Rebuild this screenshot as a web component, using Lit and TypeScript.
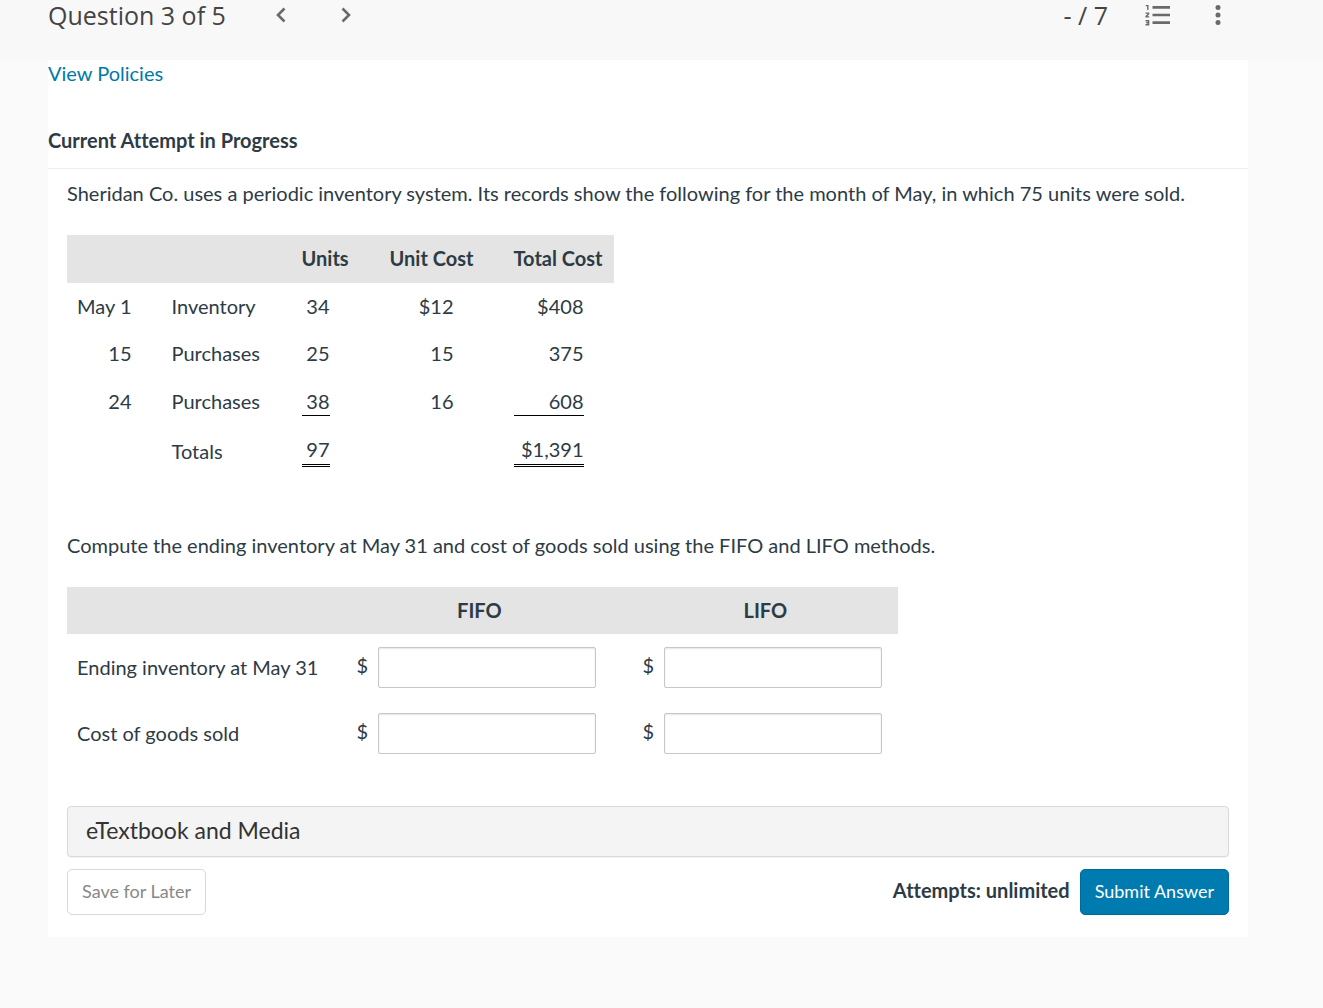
import { LitElement, html, css, svg } from "lit";
import { customElement } from "lit/decorators.js";

interface RecordRow {
  date: string;
  label: string;
  units: string;
  unitCost: string;
  total: string;
  rule: "" | "single" | "double";
}

const RECORDS: RecordRow[] = [
  { date: "May 1", label: "Inventory", units: "34", unitCost: "$12", total: "$408", rule: "" },
  { date: "15", label: "Purchases", units: "25", unitCost: "15", total: "375", rule: "" },
  { date: "24", label: "Purchases", units: "38", unitCost: "16", total: "608", rule: "single" },
  { date: "", label: "Totals", units: "97", unitCost: "", total: "$1,391", rule: "double" },
];

const ANSWERS = [
  { id: "ending", label: "Ending inventory at May 31" },
  { id: "cogs", label: "Cost of goods sold" },
];

const METHODS = ["FIFO", "LIFO"];

@customElement("question-header")
export class QuestionHeader extends LitElement {
  static styles = css`
    :host {
      display: block;
      background: #f8f8f8;
    }
    .bar {
      display: flex;
      align-items: center;
      justify-content: space-between;
      height: 30px;
      padding: 0 90px 30px 48px;
      font-family: "Open Sans", "Noto Sans", sans-serif;
      font-size: 25px;
      line-height: 30px;
      color: #444;
    }
    .side {
      display: flex;
      align-items: center;
    }
    .title {
      margin: 0;
      font-size: inherit;
      font-weight: 400;
    }
    .icon {
      display: flex;
      align-items: center;
      justify-content: center;
      width: 30px;
      height: 30px;
      padding: 0;
      border: 0;
      background: none;
      color: #6a6a6a;
      cursor: pointer;
    }
    .prev {
      margin-left: 40px;
    }
    .next {
      margin-left: 35px;
    }
    .list {
      margin-left: 35px;
    }
    .more {
      margin-left: 30px;
    }
    .icon svg {
      display: block;
    }
  `;

  private chevron(points: string) {
    return html`<svg width="12" height="16" viewBox="0 0 12 16" aria-hidden="true">
      ${svg`<polyline points=${points} fill="none" stroke="currentColor" stroke-width="2.6"/>`}
    </svg>`;
  }

  render() {
    return html`
      <header class="bar">
        <div class="side">
          <h1 class="title">Question 3 of 5</h1>
          <button class="icon prev" aria-label="Previous question">${this.chevron("9.5,1.5 3,8 9.5,14.5")}</button>
          <button class="icon next" aria-label="Next question">${this.chevron("2.5,1.5 9,8 2.5,14.5")}</button>
        </div>
        <div class="side">
          <span>- / 7</span>
          <button class="icon list" aria-label="Question list">
            <svg width="26" height="22" viewBox="0 0 26 22" aria-hidden="true">
              <path d="M7.5 3.4H25M7.5 11H25M7.5 18.6H25" stroke="currentColor" stroke-width="2.6" />
              <path
                d="M.8 1.6H2.8V6M.5 9.1H3.6V10L1.1 12.4V12.9H4.3M.5 16.7H3.6V20.8H.5M1.3 18.8H3.6"
                fill="none"
                stroke="currentColor"
                stroke-width="1.4"
              />
            </svg>
          </button>
          <button class="icon more" aria-label="More options">
            <svg width="6" height="20" viewBox="0 0 6 20" aria-hidden="true">
              <circle cx="3" cy="2.5" r="2.5" fill="currentColor" />
              <circle cx="3" cy="10" r="2.5" fill="currentColor" />
              <circle cx="3" cy="17.5" r="2.5" fill="currentColor" />
            </svg>
          </button>
        </div>
      </header>
    `;
  }
}

@customElement("app-root")
export class AppRoot extends LitElement {
  static styles = css`
    :host {
      display: block;
      min-height: 100vh;
      background: #fafafa;
      font-family: Lato, "Liberation Sans", sans-serif;
      font-size: 20px;
      font-variant-ligatures: none;
      line-height: 27px;
      color: #2d3b45;
    }
    .card {
      margin: 0 75px 0 48px;
      background: #fff;
    }
    .policies {
      display: inline-block;
      color: #0079a8;
      text-decoration: none;
    }
    .attempt {
      margin: 0;
      padding: 40px 0 14px;
      border-bottom: 1px solid #eee;
      font-size: 20px;
      font-weight: 700;
    }
    .body {
      padding: 11px 19px 22px;
    }
    .text {
      margin: 0;
    }
    table {
      border-collapse: collapse;
    }
    .records {
      margin: 28px 0 55px;
    }
    .answers {
      margin: 28px 0 40px;
    }
    th,
    td {
      padding: 10px 30px 10px 10px;
      white-space: nowrap;
      text-align: left;
    }
    thead tr {
      background: #e4e4e4;
    }
    .records thead th {
      padding-bottom: 11px;
    }
    .item {
      min-width: 90px;
    }
    .units {
      min-width: 48px;
    }
    .cost {
      min-width: 84px;
    }
    .total {
      min-width: 90px;
    }
    th:last-child {
      padding-right: 10px;
    }
    .num {
      text-align: right;
    }
    .wide {
      padding-right: 50px;
    }
    .single {
      border-bottom: 1px solid #000;
      line-height: 28px;
    }
    .double {
      padding-bottom: 1px;
      border-bottom: 3px double #000;
    }
    .answers th {
      text-align: center;
    }
    .answers .row {
      padding-right: 28px;
      text-align: left;
      font-weight: 400;
    }
    .answers tbody td:last-child {
      padding-right: 10px;
    }
    .answers tbody th,
    .answers tbody td {
      padding-top: 13px;
      padding-bottom: 12px;
    }
    .money {
      display: flex;
      align-items: center;
      gap: 10px;
      width: 246px;
    }
    .sign {
      width: 12px;
      padding-bottom: 4px;
    }
    .field {
      box-sizing: border-box;
      width: 218px;
      height: 41px;
      padding: 8px 12px;
      border: 1px solid #c7c7c7;
      border-radius: 2px;
      background: #fff;
      box-shadow: inset 0 1px 2px rgba(0, 0, 0, 0.1);
      font: inherit;
      color: inherit;
    }
    .media {
      display: block;
      box-sizing: border-box;
      width: 100%;
      padding: 8px 18px 11px;
      border: 1px solid #dadada;
      border-radius: 4px;
      background: #f4f4f4;
      box-shadow: 0 1px 1px rgba(0, 0, 0, 0.05);
      font: inherit;
      font-size: 23px;
      line-height: 30px;
      text-align: left;
      color: #333;
      cursor: pointer;
    }
    .actions {
      display: flex;
      align-items: center;
      justify-content: space-between;
      padding-top: 12px;
    }
    .submit-group {
      display: flex;
      align-items: center;
      gap: 10px;
    }
    .attempts {
      padding-bottom: 4px;
      font-weight: 700;
    }
    .button {
      padding: 7px 14px 9px;
      border: 1px solid #d8d8d8;
      border-radius: 5px;
      background: #fff;
      font: inherit;
      font-size: 18px;
      line-height: 28px;
      color: #888;
      cursor: pointer;
    }
    .primary {
      border-color: #006b98;
      background: #007bb0;
      color: #fff;
    }
  `;

  private renderRecord(row: RecordRow) {
    return html`<tr>
      <td class="num">${row.date}</td>
      <td><div class="item">${row.label}</div></td>
      <td class="num wide"><div class=${row.rule}>${row.units}</div></td>
      <td class="num wide">${row.unitCost}</td>
      <td class="num"><div class=${row.rule}>${row.total}</div></td>
    </tr>`;
  }

  private renderAnswer(row: { id: string; label: string }) {
    return html`<tr>
      <th scope="row" class="row" id=${row.id}>${row.label}</th>
      ${METHODS.map((method) => {
        const fieldId = `${row.id}-${method}`;
        return html`<td>
          <div class="money">
            <label class="sign" for=${fieldId}>$</label>
            <input class="field" type="text" id=${fieldId} aria-labelledby="${row.id} ${method}" />
          </div>
        </td>`;
      })}
    </tr>`;
  }

  render() {
    return html`
      <question-header></question-header>
      <main class="card">
        <a class="policies" href="#policies">View Policies</a>
        <h2 class="attempt">Current Attempt in Progress</h2>
        <div class="body">
          <p class="text">
            Sheridan Co. uses a periodic inventory system. Its records show the following for the month of May, in which
            75 units were sold.
          </p>
          <table class="records">
            <thead>
              <tr>
                <th></th>
                <th></th>
                <th scope="col"><div class="units">Units</div></th>
                <th scope="col"><div class="cost">Unit Cost</div></th>
                <th scope="col"><div class="total">Total Cost</div></th>
              </tr>
            </thead>
            <tbody>
              ${RECORDS.map((row) => this.renderRecord(row))}
            </tbody>
          </table>
          <p class="text">
            Compute the ending inventory at May 31 and cost of goods sold using the FIFO and LIFO methods.
          </p>
          <table class="answers">
            <thead>
              <tr>
                <th></th>
                ${METHODS.map((method) => html`<th scope="col" id=${method}>${method}</th>`)}
              </tr>
            </thead>
            <tbody>
              ${ANSWERS.map((row) => this.renderAnswer(row))}
            </tbody>
          </table>
          <button class="media">eTextbook and Media</button>
          <div class="actions">
            <button class="button">Save for Later</button>
            <div class="submit-group">
              <span class="attempts">Attempts: unlimited</span>
              <button class="button primary">Submit Answer</button>
            </div>
          </div>
        </div>
      </main>
    `;
  }
}
